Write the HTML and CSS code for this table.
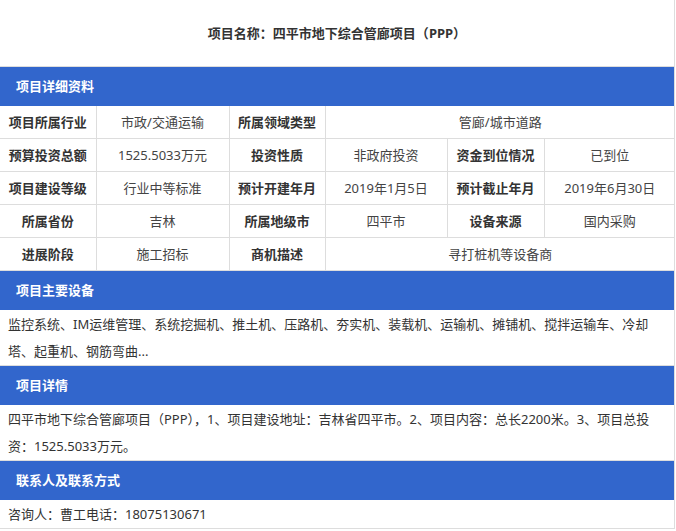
FILE: index.html
```html
<!DOCTYPE html>
<html lang="zh-CN">
<head>
<meta charset="utf-8">
<title>项目详细资料</title>
<link rel="stylesheet" href="styles.css">
</head>
<body>
<div class="page">
  <div class="title">项目名称：四平市地下综合管廊项目（<b class="latin">PPP</b>）</div>

  <div class="bar">项目详细资料</div>
  <table class="info">
    <colgroup>
      <col class="c1"><col class="c2"><col class="c3"><col class="c4"><col class="c5"><col class="c6">
    </colgroup>
    <tr>
      <th>项目所属行业</th><td>市政/交通运输</td>
      <th>所属领域类型</th><td colspan="3">管廊/城市道路</td>
    </tr>
    <tr>
      <th>预算投资总额</th><td>1525.5033万元</td>
      <th>投资性质</th><td>非政府投资</td>
      <th>资金到位情况</th><td>已到位</td>
    </tr>
    <tr>
      <th>项目建设等级</th><td>行业中等标准</td>
      <th>预计开建年月</th><td>2019年1月5日</td>
      <th>预计截止年月</th><td>2019年6月30日</td>
    </tr>
    <tr>
      <th>所属省份</th><td>吉林</td>
      <th>所属地级市</th><td>四平市</td>
      <th>设备来源</th><td>国内采购</td>
    </tr>
    <tr>
      <th>进展阶段</th><td>施工招标</td>
      <th>商机描述</th><td colspan="3">寻打桩机等设备商</td>
    </tr>
  </table>

  <div class="bar">项目主要设备</div>
  <div class="text">监控系统、IM运维管理、系统挖掘机、推土机、压路机、夯实机、装载机、运输机、摊铺机、搅拌运输车、冷却塔、起重机、钢筋弯曲...</div>

  <div class="bar">项目详情</div>
  <div class="text">四平市地下综合管廊项目（PPP），1、项目建设地址：吉林省四平市。2、项目内容：总长2200米。3、项目总投资：1525.5033万元。</div>

  <div class="bar">联系人及联系方式</div>
  <div class="text">咨询人：曹工电话：18075130671</div>
</div>
</body>
</html>
```

FILE: styles.css
```css
html, body {
  margin: 0;
  padding: 0;
  background: #fff;
}

body {
  font-family: "Noto Sans", "Noto Sans CJK SC", sans-serif;
  font-size: 13px;
  color: #333;
}

.page {
  width: 675px;
  box-sizing: border-box;
  border-right: 1px solid #ddd;
}

.title {
  height: 66px;
  line-height: 66px;
  text-align: center;
  font-weight: bold;
  font-size: 13px;
  color: #333;
  border-bottom: 1px solid #ddd;
}

.title .latin {
  font-weight: bold;
}

.bar {
  height: 39px;
  line-height: 39px;
  padding-left: 16px;
  background: #3266cc;
  color: #fff;
  font-weight: bold;
  font-size: 13px;
}

.info {
  width: 100%;
  border-collapse: collapse;
  table-layout: fixed;
}

.info .c1 { width: 96px; }
.info .c2 { width: 133px; }
.info .c3 { width: 96px; }
.info .c4 { width: 122px; }
.info .c5 { width: 97px; }
.info .c6 { width: 131px; }

.info th,
.info td {
  height: 32px;
  padding: 0;
  text-align: center;
  vertical-align: middle;
  border: 1px solid #ddd;
  border-top: none;
  font-size: 13px;
  line-height: 18px;
}

.info tr > :first-child {
  border-left: none;
}

.info tr > :last-child {
  border-right: none;
}

.info th {
  font-weight: bold;
  color: #333;
}

.info td {
  font-weight: normal;
  color: #444;
}

.text {
  padding: 1px 8px 0;
  line-height: 27px;
  font-size: 13px;
  color: #333;
  border-bottom: 1px solid #ddd;
}
```
